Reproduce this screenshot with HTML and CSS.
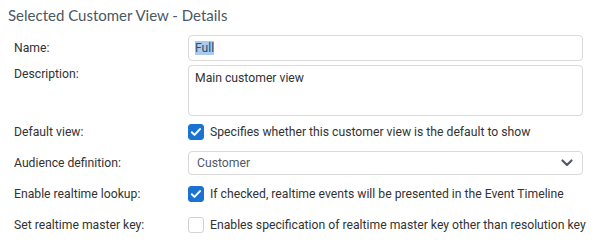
FILE: index.html
```html
<!DOCTYPE html>
<html lang="en">
<head>
  <meta charset="UTF-8">
  <title>Selected Customer View - Details</title>
  <link rel="stylesheet" href="styles.css">
</head>
<body>
  <h2 class="title">Selected Customer View - Details</h2>
  <div class="form">
    <div class="row">
      <label class="label">Name:</label>
      <div class="field"><div class="input"><span class="selected">Full</span></div></div>
    </div>
    <div class="row row-top">
      <label class="label">Description:</label>
      <div class="field"><div class="textarea">Main customer view</div></div>
    </div>
    <div class="row">
      <label class="label">Default view:</label>
      <div class="field check">
        <span class="box checked"><svg viewBox="0 0 16 16" width="16" height="16"><path d="M3.8 8.2l2.7 2.7 5.5-5.8" fill="none" stroke="#fff" stroke-width="2" stroke-linecap="round" stroke-linejoin="round"/></svg></span>
        <span>Specifies whether this customer view is the default to show</span>
      </div>
    </div>
    <div class="row">
      <label class="label">Audience definition:</label>
      <div class="field">
        <div class="select">
          <span>Customer</span>
          <svg class="chevron" viewBox="0 0 12 8" width="12" height="8"><path d="M1.5 1.5l4.5 4.5 4.5-4.5" fill="none" stroke="#4f5b66" stroke-width="2.2" stroke-linecap="round" stroke-linejoin="round"/></svg>
        </div>
      </div>
    </div>
    <div class="row">
      <label class="label">Enable realtime lookup:</label>
      <div class="field check">
        <span class="box checked"><svg viewBox="0 0 16 16" width="16" height="16"><path d="M3.8 8.2l2.7 2.7 5.5-5.8" fill="none" stroke="#fff" stroke-width="2" stroke-linecap="round" stroke-linejoin="round"/></svg></span>
        <span>If checked, realtime events will be presented in the Event Timeline</span>
      </div>
    </div>
    <div class="row">
      <label class="label">Set realtime master key:</label>
      <div class="field check">
        <span class="box"></span>
        <span>Enables specification of realtime master key other than resolution key</span>
      </div>
    </div>
  </div>
</body>
</html>
```

FILE: styles.css
```css
body {
  margin: 0;
  padding: 0 8px;
  background: #fff;
  font-family: Roboto, "Liberation Sans", sans-serif;
  font-size: 12.2px;
  color: #333;
}
.title {
  font-family: Lato, "Open Sans", sans-serif;
  font-weight: normal;
  font-size: 15px;
  color: #4a5864;
  margin: 0;
  padding-top: 5px;
  height: 28px;
  line-height: 20px;
}
.form {
  display: flex;
  flex-direction: column;
}
.row {
  display: grid;
  grid-template-columns: 180px 395px;
  align-items: center;
  min-height: 31px;
  white-space: nowrap;
}
.row:first-child {
  min-height: 30px;
}
.row-top {
  align-items: start;
  padding-top: 2px;
}
.label {
  padding-left: 6px;
}
.row-top .label {
  padding-top: 2px;
}
.input, .textarea, .select {
  border: 1px solid #d9d9d9;
  border-radius: 4px;
  background: #fff;
  box-sizing: border-box;
  padding: 0 6px;
}
.input {
  height: 26px;
  line-height: 24px;
}
.selected {
  background: #a9cbec;
  color: #2b4f75;
}
.textarea {
  height: 51px;
  padding-top: 3px;
  line-height: 18px;
}
.select {
  height: 24px;
  display: flex;
  align-items: center;
  justify-content: space-between;
  padding: 0 8px;
  color: #4f5b66;
}
.chevron {
  margin-right: 1px;
}
.check {
  display: flex;
  align-items: center;
  gap: 6px;
}
.box {
  width: 16px;
  height: 16px;
  box-sizing: border-box;
  border: 1px solid #cfd4d9;
  border-radius: 3px;
  background: #fff;
  flex: none;
}
.box svg {
  display: block;
  margin: -1px;
}
.box.checked {
  background: #1b72d0;
  border-color: #1b72d0;
}
```
